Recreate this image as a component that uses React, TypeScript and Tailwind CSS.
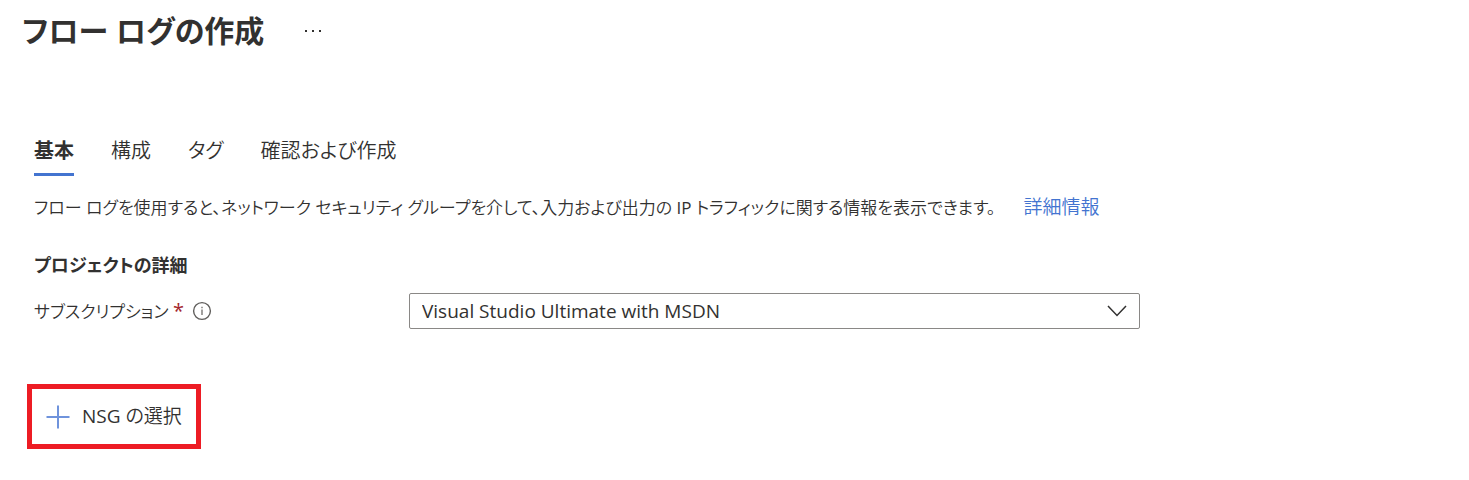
const tabs = ["基本", "構成", "タグ", "確認および作成"];

function InfoIcon() {
  return (
    <svg viewBox="0 0 20 20" className="size-5 shrink-0" fill="none" stroke="#605e5c" strokeWidth="1.4" aria-hidden="true">
      <circle cx="10" cy="10" r="8.4" />
      <path d="M10 8.5v5.5M10 5.8v1.4" stroke="#8a8886" strokeWidth="1.6" />
    </svg>
  );
}

function PlusIcon() {
  return (
    <svg viewBox="0 0 24 24" className="size-6" fill="none" stroke="#6f93dc" strokeWidth="2" aria-hidden="true">
      <path d="M12 0.5v23M0.5 12h23" />
    </svg>
  );
}

function ChevronIcon() {
  return (
    <svg
      viewBox="0 0 20 12"
      className="pointer-events-none absolute top-1/2 right-[13px] h-3 w-5 -translate-y-1/2"
      fill="none"
      stroke="#323130"
      strokeWidth="1.5"
      aria-hidden="true"
    >
      <path d="M1 1l9 9.5L19 1" />
    </svg>
  );
}

export default function App() {
  return (
    <main className="min-h-screen bg-white px-[34px] pt-2 font-['Open_Sans','Noto_Sans_CJK_JP',sans-serif] text-[#323130] [font-feature-settings:'palt']">
      <header className="-ml-3 flex items-center gap-10">
        <h1 className="text-[30px] leading-[46px] font-bold">フロー ログの作成</h1>
        <button type="button" aria-label="その他" className="flex h-6 items-center">
          <svg viewBox="0 0 18 4" className="h-1 w-[18px]" fill="currentColor" aria-hidden="true">
            <path d="M1 1h2v2H1zM8 1h2v2H8zM15 1h2v2h-2z" />
          </svg>
        </button>
      </header>

      <nav className="mt-[81px] flex gap-[37px]" aria-label="手順">
        {tabs.map((tab, i) => (
          <button
            key={tab}
            type="button"
            aria-current={i === 0 ? "step" : undefined}
            className={
              i === 0
                ? "border-b-3 border-[#4374d0] pb-[6px] text-[20px] leading-8 font-bold"
                : "border-b-3 border-transparent pb-[6px] text-[20px] leading-8 font-[350]"
            }
          >
            {tab}
          </button>
        ))}
      </nav>

      <p className="mt-[15px] flex flex-wrap items-baseline gap-x-7 text-[17px] leading-8 font-[350]">
        <span>
          フロー ログを使用すると、ネットワーク セキュリティ グループを介して、入力および出力の <span className="font-normal">IP</span> トラフィックに関する情報を表示できます。
        </span>
        <a href="#details" className="text-[19px] text-[#4374d0]">
          詳細情報
        </a>
      </p>

      <h2 className="mt-[25px] text-[18px] leading-8 font-bold">プロジェクトの詳細</h2>

      <div className="mt-3 flex items-center">
        <div className="flex w-[375px] items-center gap-2">
          <label htmlFor="subscription" className="text-[17px] leading-8 font-[350]">
            サブスクリプション <span className="text-[20px] font-normal text-[#a4262c]">*</span>
          </label>
          <InfoIcon />
        </div>
        <div className="relative max-w-[731px] flex-1">
          <select
            id="subscription"
            className="h-9 w-full appearance-none rounded-xs border border-[#8a8886] bg-white px-3 text-[19px]"
          >
            <option>Visual Studio Ultimate with MSDN</option>
          </select>
          <ChevronIcon />
        </div>
      </div>

      <button
        type="button"
        className="mt-[55px] -ml-[7px] flex h-[65px] items-center gap-3 border-5 border-[#ed1c24] px-[14px] text-[19px] font-[350]"
      >
        <PlusIcon />
        <span>
          <span className="font-normal">NSG</span> の選択
        </span>
      </button>
    </main>
  );
}
